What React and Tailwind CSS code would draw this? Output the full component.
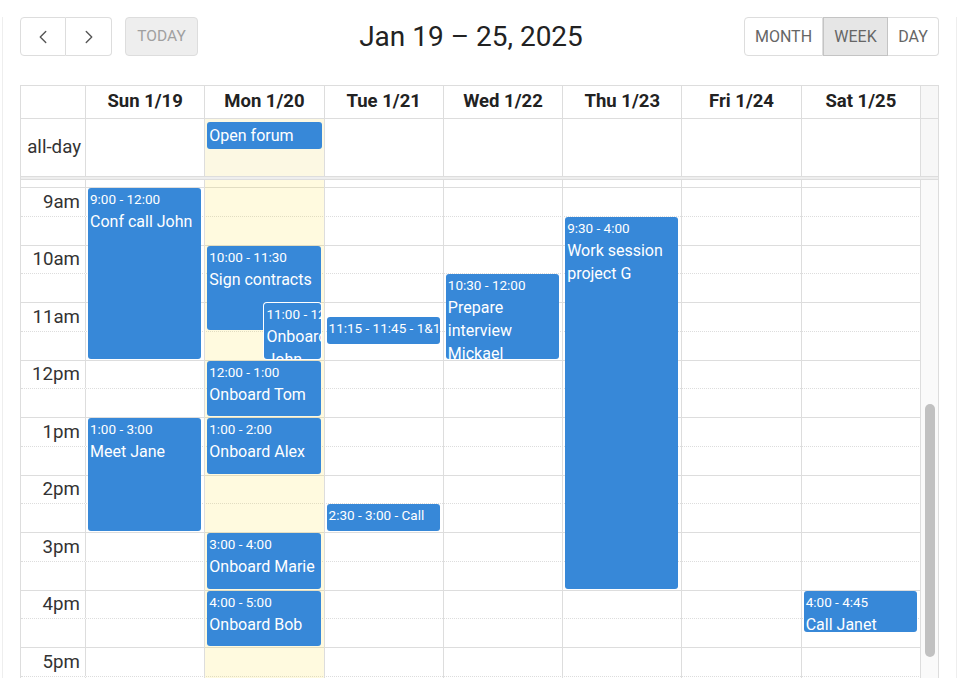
import { ChevronLeft, ChevronRight } from "lucide-react";

const HOUR = 57.5;
const days = ["Sun 1/19", "Mon 1/20", "Tue 1/21", "Wed 1/22", "Thu 1/23", "Fri 1/24", "Sat 1/25"];
const hours = ["9am", "10am", "11am", "12pm", "1pm", "2pm", "3pm", "4pm", "5pm"];

// day index, start, end (decimal hours), time label, title
const events = [
  { day: 0, start: 9, end: 12, time: "9:00 - 12:00", title: "Conf call John" },
  { day: 0, start: 13, end: 15, time: "1:00 - 3:00", title: "Meet Jane" },
  { day: 1, start: 10, end: 11.5, time: "10:00 - 11:30", title: "Sign contracts" },
  { day: 1, start: 11, end: 12, time: "11:00 - 12:00", title: "Onboard John", overlap: true },
  { day: 1, start: 12, end: 13, time: "12:00 - 1:00", title: "Onboard Tom" },
  { day: 1, start: 13, end: 14, time: "1:00 - 2:00", title: "Onboard Alex" },
  { day: 1, start: 15, end: 16, time: "3:00 - 4:00", title: "Onboard Marie" },
  { day: 1, start: 16, end: 17, time: "4:00 - 5:00", title: "Onboard Bob" },
  { day: 2, start: 11.25, end: 11.75, time: "11:15 - 11:45", title: "1&1 with Paul", short: true },
  { day: 2, start: 14.5, end: 15, time: "2:30 - 3:00", title: "Call", short: true },
  { day: 3, start: 10.5, end: 12, time: "10:30 - 12:00", title: "Prepare interview Mickael" },
  { day: 4, start: 9.5, end: 16, time: "9:30 - 4:00", title: "Work session project G" },
  { day: 6, start: 16, end: 16.75, time: "4:00 - 4:45", title: "Call Janet" },
];

function TimedEvent({ ev }) {
  const top = 7 + (ev.start - 9) * HOUR + 1;
  const height = (ev.end - ev.start) * HOUR - 2;
  return (
    <div
      className={`absolute right-[3px] rounded-[3px] bg-[#3788d8] text-white overflow-hidden ${
        ev.overlap ? "left-1/2 shadow-[0_0_0_1px_#fff] z-10" : "left-[2px]"
      }`}
      style={{ top, height }}
    >
      {ev.short ? (
        <div className="px-[2px] pt-[1px] text-[13.5px] leading-[20px] whitespace-nowrap">
          {ev.time} - {ev.title}
        </div>
      ) : (
        <div className="px-[2px] pt-[1px]">
          <div className="text-[13.5px] leading-[20px] mb-[1px] whitespace-nowrap">{ev.time}</div>
          <div className="text-[16px] leading-[23px]">{ev.title}</div>
        </div>
      )}
    </div>
  );
}

export default function App() {
  const slots = [];
  hours.forEach((h) => {
    slots.push({ label: h, minor: false });
    slots.push({ label: "", minor: true });
  });

  return (
    <div className="w-[960px] h-[678px] overflow-hidden bg-white font-['Roboto',sans-serif] text-[#333]">
      <div className="ml-[2px] w-[955px] h-full border-x border-[#eee] px-[17px]">
        {/* toolbar */}
        <div className="flex justify-between items-center h-[39px] mt-[17px] mb-[29px]">
          <div className="flex items-center">
            <div className="flex">
              <button className="w-[46px] h-[39px] flex items-center justify-center border border-[#ddd] rounded-l-[4px] text-[#555]">
                <ChevronLeft size={22} strokeWidth={1.5} />
              </button>
              <button className="w-[46px] h-[39px] flex items-center justify-center border-y border-r border-[#ddd] rounded-r-[4px] text-[#555]">
                <ChevronRight size={22} strokeWidth={1.5} />
              </button>
            </div>
            <button className="ml-[13px] w-[73px] h-[39px] border border-[#ddd] rounded-[4px] bg-[#eee] text-[#a0a0a0] text-[15.5px]">
              TODAY
            </button>
          </div>
          <h2 className="text-[28px] text-[#222] font-normal">Jan 19 – 25, 2025</h2>
          <div className="flex text-[16px] text-[#666]">
            <button className="w-[79px] h-[39px] border border-[#ddd] rounded-l-[4px]">MONTH</button>
            <button className="w-[65px] h-[39px] border-y border-x border-[#c4c4c4] bg-[#e6e6e6]">WEEK</button>
            <button className="w-[51px] h-[39px] border-y border-r border-[#ddd] rounded-r-[4px]">DAY</button>
          </div>
        </div>

        {/* grid */}
        <div className="w-[919px] border border-[#ddd]">
          {/* header */}
          <div className="flex h-[33px] border-b border-[#ddd]">
            <div className="w-[65px] border-r border-[#ddd]" />
            {days.map((d) => (
              <div
                key={d}
                className="flex-1 border-r border-[#ddd] flex items-center justify-center font-bold text-[18.5px] text-[#222]"
              >
                {d}
              </div>
            ))}
            <div className="w-[17px] bg-[#f7f7f7]" />
          </div>

          {/* all-day */}
          <div className="flex h-[58px] border-b border-[#ddd]">
            <div className="w-[65px] border-r border-[#ddd] flex items-center justify-end pr-[4px] text-[18.7px]">
              all-day
            </div>
            {days.map((d, i) => (
              <div
                key={d}
                className={`flex-1 border-r border-[#ddd] ${i === 1 ? "bg-[#fcf8e3]" : ""}`}
              >
                {i === 1 && (
                  <div className="mt-[3px] mx-[2px] h-[27px] rounded-[3px] bg-[#3788d8] text-white text-[16px] leading-[27px] px-[2px]">
                    Open forum
                  </div>
                )}
              </div>
            ))}
            <div className="w-[17px] bg-[#f7f7f7]" />
          </div>

          {/* divider */}
          <div className="h-[3px] bg-[#eee] border-b border-[#ddd]" />

          {/* time grid */}
          <div className="flex h-[520px] overflow-hidden">
            <div className="relative w-[900px]">
              <div className="h-[7px] flex">
                <div className="w-[65px] border-r border-[#ddd]" />
                <div className="flex-1" />
              </div>
              {slots.map((s, i) => (
                <div
                  key={i}
                  className={`flex h-[28.75px] border-t border-[#ddd] ${s.minor ? "border-dotted" : ""}`}
                >
                  <div className="w-[65px] border-r border-[#ddd] flex items-center justify-end pr-[5px] text-[18.7px]">
                    {s.label}
                  </div>
                  <div className="flex-1" />
                </div>
              ))}

              {/* day columns with events */}
              <div className="absolute top-0 bottom-0 left-[65px] right-0 grid grid-cols-7">
                {days.map((d, i) => (
                  <div
                    key={d}
                    className={`relative border-r border-[#ddd] ${i === 1 ? "bg-[rgba(255,220,40,0.15)]" : ""}`}
                  >
                    {events
                      .filter((e) => e.day === i)
                      .map((e) => (
                        <TimedEvent key={e.time + e.title} ev={e} />
                      ))}
                  </div>
                ))}
              </div>
            </div>

            {/* scrollbar */}
            <div className="w-[17px] bg-[#fafafa] flex justify-center">
              <div className="mt-[224px] w-[10px] h-[253px] rounded-full bg-[#c1c1c1]" />
            </div>
          </div>
        </div>
      </div>
    </div>
  );
}
